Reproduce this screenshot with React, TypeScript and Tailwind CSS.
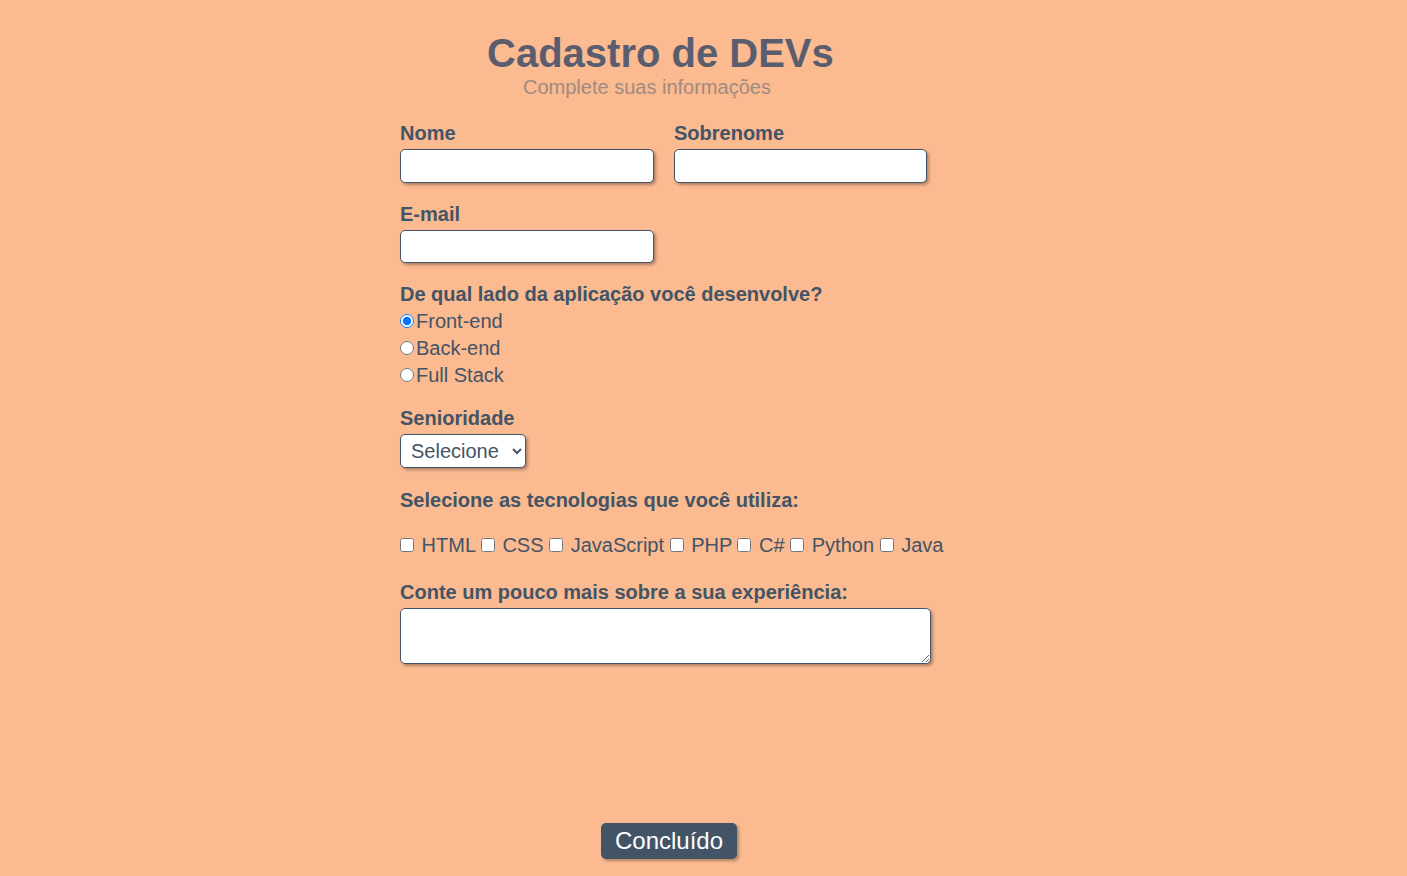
import { useState } from 'react';

const techs = ['HTML', 'CSS', 'JavaScript', 'PHP', 'C#', 'Python', 'Java'];
const sides = ['Front-end', 'Back-end', 'Full Stack'];

const labelCls = 'block text-[20px] leading-[23px] font-bold';
const inputCls =
  'block bg-white border border-[#435466] rounded-[5px] shadow-[2px_2px_3px_rgba(0,0,0,0.3)] px-2 outline-none';

export default function App() {
  const [side, setSide] = useState('Front-end');

  return (
    <main className="min-h-screen bg-[#fbba90] text-[#435466] font-['Liberation_Sans',Arial,sans-serif]">
      <div className="mx-auto w-[607px] pt-[30px] pb-[17px]">
        <h1 className="pl-[87px] text-[40px] leading-[46px] font-bold text-[#5a5d6d]">Cadastro de DEVs</h1>
        <p className="pl-[123px] text-[20px] leading-[23px] text-[#a08a80]">Complete suas informações</p>

        <form onSubmit={(e) => e.preventDefault()}>
          <div className="mt-[23px] flex gap-5">
            <div>
              <label className={labelCls}>Nome</label>
              <input type="text" className={`${inputCls} mt-1 h-[34px] w-[254px]`} />
            </div>
            <div>
              <label className={labelCls}>Sobrenome</label>
              <input type="text" className={`${inputCls} mt-1 h-[34px] w-[253px]`} />
            </div>
          </div>

          <label className={`${labelCls} mt-[20px]`}>E-mail</label>
          <input type="email" className={`${inputCls} mt-1 h-[33px] w-[254px]`} />

          <p className="mt-[18px] text-[20px] leading-[27px] font-bold">De qual lado da aplicação você desenvolve?</p>
          {sides.map((s) => (
            <label key={s} className="block text-[20px] leading-[27px]">
              <input
                type="radio"
                name="lado"
                className="mr-[2px] w-[14px] h-[14px]"
                checked={side === s}
                onChange={() => setSide(s)}
              />
              {s}
            </label>
          ))}

          <label className={`${labelCls} mt-[18px]`}>Senioridade</label>
          <select className="mt-1 block h-[34px] w-[126px] bg-white border border-[#435466] rounded-[5px] shadow-[2px_2px_3px_rgba(0,0,0,0.3)] pl-[6px] pr-1 text-[20px] outline-none">
            <option>Selecione</option>
            <option>Júnior</option>
            <option>Pleno</option>
            <option>Sênior</option>
          </select>

          <p className={`${labelCls} mt-[21px]`}>Selecione as tecnologias que você utiliza:</p>
          <div className="mt-[22px] text-[20px] leading-[23px] whitespace-nowrap">
            {techs.map((t, i) => (
              <span key={t}>
                {i > 0 && ' '}
                <label>
                  <input type="checkbox" className="mr-[2px] w-[14px] h-[14px]" /> {t}
                </label>
              </span>
            ))}
          </div>

          <label className={`${labelCls} mt-[24px]`}>Conte um pouco mais sobre a sua experiência:</label>
          <textarea className="mt-1 block h-[56px] w-[531px] bg-white border border-[#435466] rounded-[5px] shadow-[2px_2px_3px_rgba(0,0,0,0.3)] p-2 outline-none" />

          <button
            type="submit"
            className="mt-[159px] ml-[201px] block h-[36px] w-[136px] bg-[#435466] text-white text-[24px] leading-[28px] rounded-[5px] shadow-[2px_2px_3px_rgba(0,0,0,0.3)]"
          >
            Concluído
          </button>
        </form>
      </div>
    </main>
  );
}
